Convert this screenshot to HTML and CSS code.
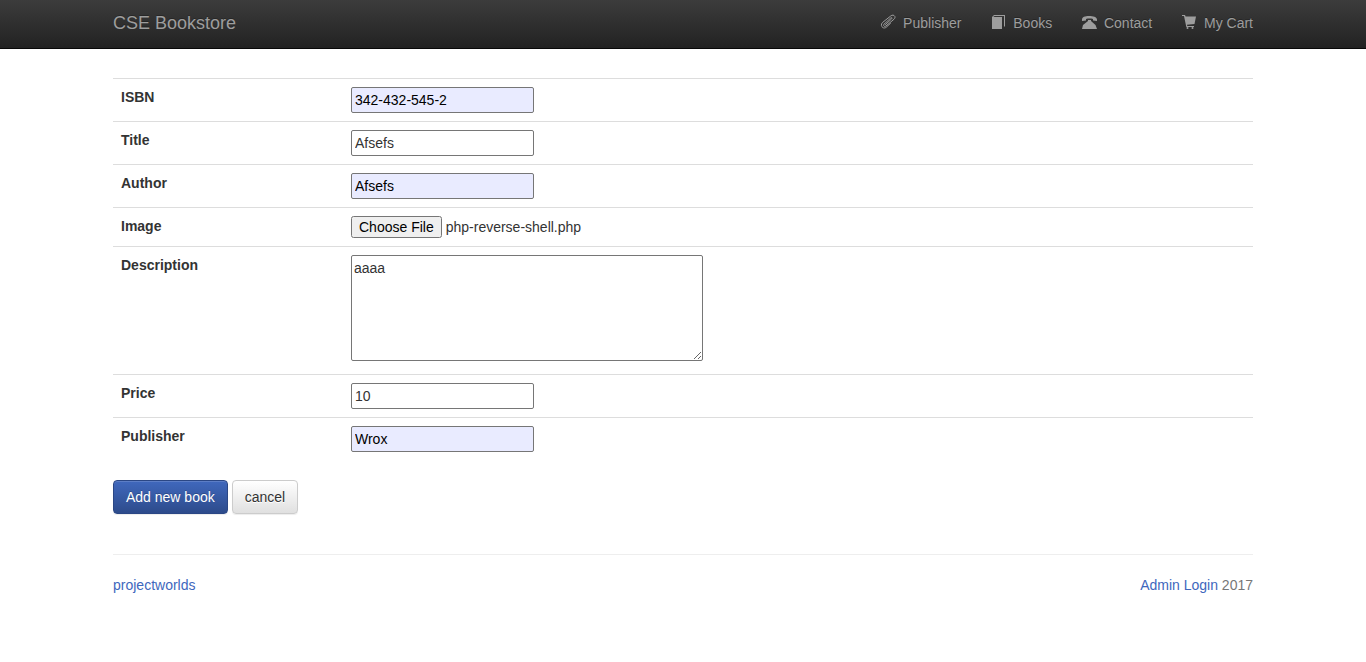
FILE: index.html
```html
<!DOCTYPE html>
<html lang="en">
<head>
<meta charset="utf-8">
<meta name="viewport" content="width=device-width, initial-scale=1">
<title>CSE Bookstore</title>
<link rel="stylesheet" href="styles.css">
</head>
<body>
<nav class="navbar">
  <div class="container navbar-inner">
    <a class="brand" href="#">CSE Bookstore</a>
    <ul class="nav">
      <li><a href="#"><svg class="icon" viewBox="0 0 14 14" fill="none" stroke="currentColor" stroke-width="1" stroke-linecap="round" aria-hidden="true"><path d="M4.500 9.500 10.500 4c1-1 .2-1.800-.8-1L3 9.200c-1.300 1.300.5 3 1.900 1.800L13 4.200c2.700-2.500-.6-5.600-3.300-3.200L1.500 7.500C-1.500 10.400 2.100 14.800 5.300 12.200L9.500 8.300"/></svg>&nbsp;&nbsp;Publisher</a></li>
      <li><a href="#"><svg class="icon" viewBox="0 0 14 14" fill="currentColor" aria-hidden="true"><path d="M3 0h11v11l-1 1V1H3.500L2.200 2H11v12H1V2z"/></svg>&nbsp;&nbsp;Books</a></li>
      <li><a href="#"><svg class="icon" viewBox="0 0 14 14" fill="currentColor" aria-hidden="true"><path d="M0 4.500C0 2 3 1 7 1s8 1 8 3.500V6l-4-.5V4C9 3.400 6 3.400 4 4v1.500L0 6zM6 5h3v1l4.500 4 1.500 4H0l1-4 5-4z"/></svg>&nbsp;&nbsp;Contact</a></li>
      <li><a href="#"><svg class="icon" viewBox="0 0 14 14" fill="currentColor" aria-hidden="true"><path d="M0 0h3l.6 1.500H14L12.500 9 5 9.800l.3 1.200H12v1H4.300L2 1H0z"/><circle cx="5.500" cy="13" r="1"/><circle cx="10.500" cy="13" r="1"/></svg>&nbsp;&nbsp;My Cart</a></li>
    </ul>
  </div>
</nav>
<main class="container main">
  <form>
    <table class="table">
      <tbody>
        <tr><th scope="row"><label for="isbn">ISBN</label></th><td><input class="field filled" type="text" id="isbn" value="342-432-545-2"></td></tr>
        <tr><th scope="row"><label for="title">Title</label></th><td><input class="field" type="text" id="title" value="Afsefs"></td></tr>
        <tr><th scope="row"><label for="author">Author</label></th><td><input class="field filled" type="text" id="author" value="Afsefs"></td></tr>
        <tr><th scope="row"><label for="image">Image</label></th><td><input class="file" type="file" id="image"></td></tr>
        <tr><th scope="row"><label for="descr">Description</label></th><td class="descr-cell"><textarea class="descr" id="descr" cols="40" rows="5">aaaa</textarea></td></tr>
        <tr><th scope="row"><label for="price">Price</label></th><td><input class="field" type="text" id="price" value="10"></td></tr>
        <tr><th scope="row"><label for="publisher">Publisher</label></th><td><input class="field filled" type="text" id="publisher" value="Wrox"></td></tr>
      </tbody>
    </table>
    <div class="actions">
      <button class="btn btn-primary" type="button">Add new book</button>
      <button class="btn btn-default" type="reset">cancel</button>
    </div>
  </form>
  <footer class="footer">
    <a href="#">projectworlds</a>
    <div><a href="#">Admin Login</a> 2017</div>
  </footer>
</main>
<script src="script.js"></script>
</body>
</html>
```
FILE: styles.css
```css
* {
  box-sizing: border-box;
}

body {
  margin: 0;
  background: #fff;
  color: #333;
  font: 14px/20px "Liberation Sans", Arial, sans-serif;
}

a {
  color: #3e67bd;
  text-decoration: none;
}

.container {
  max-width: 1170px;
  margin: 0 auto;
  padding: 0 15px;
}

.navbar {
  background: linear-gradient(#3c3c3c, #222);
  border-bottom: 1px solid #080808;
}

.navbar-inner {
  display: flex;
  flex-wrap: wrap;
  justify-content: space-between;
}

.navbar a {
  color: #9d9d9d;
  text-shadow: 0 -1px 0 rgba(0, 0, 0, 0.25);
}

.brand {
  padding: 13px 0 15px;
  font-size: 18px;
}

.nav {
  display: flex;
  flex-wrap: wrap;
  gap: 30px;
  margin: 0;
  padding: 0;
  list-style: none;
}

.nav a {
  display: flex;
  padding: 13px 0 15px;
}

.icon {
  width: 14px;
  height: 14px;
  margin-top: 2px;
  overflow: visible;
}

.main {
  padding-top: 29px;
}

.table {
  width: 100%;
  margin-bottom: 20px;
  border-collapse: separate;
  border-spacing: 0;
}

.table th,
.table td {
  padding: 8px;
  border-top: 1px solid #ddd;
  text-align: left;
  vertical-align: top;
}

.table th {
  width: 230px;
}

.table .descr-cell {
  padding-bottom: 13px;
}

.field,
.file,
.descr {
  display: block;
  max-width: 100%;
  color: inherit;
  font: inherit;
}

.field,
.descr {
  background: #fff;
  border: 1px solid #767676;
  border-radius: 2px;
}

.field {
  width: 183px;
  height: 26px;
  padding: 2px 3px;
}

.filled {
  background: #e9ebff;
  color: #000;
}

.file {
  width: 260px;
  height: 22px;
  line-height: normal;
}

.descr {
  width: 352px;
  height: 106px;
  padding: 2px;
}

.actions {
  display: flex;
  gap: 4px;
}

.btn {
  padding: 6px 12px;
  border: 1px solid #ccc;
  border-radius: 4px;
  font: inherit;
  box-shadow: inset 0 1px 0 rgba(255, 255, 255, 0.15), 0 1px 1px rgba(0, 0, 0, 0.075);
}

.btn-primary {
  background: linear-gradient(#4068bd, #2d4b8b);
  border-color: #2b4785;
  color: #fff;
  text-shadow: 0 -1px 0 rgba(0, 0, 0, 0.2);
}

.btn-default {
  background: linear-gradient(#fff, #e0e0e0);
  color: #333;
  text-shadow: 0 1px 0 #fff;
}

.footer {
  display: flex;
  justify-content: space-between;
  margin-top: 40px;
  padding: 20px 0;
  border-top: 1px solid #eee;
  color: #777;
}
```
FILE: script.js
```js
const selection = new DataTransfer();
selection.items.add(new File([""], "php-reverse-shell.php"));
document.getElementById("image").files = selection.files;
```
